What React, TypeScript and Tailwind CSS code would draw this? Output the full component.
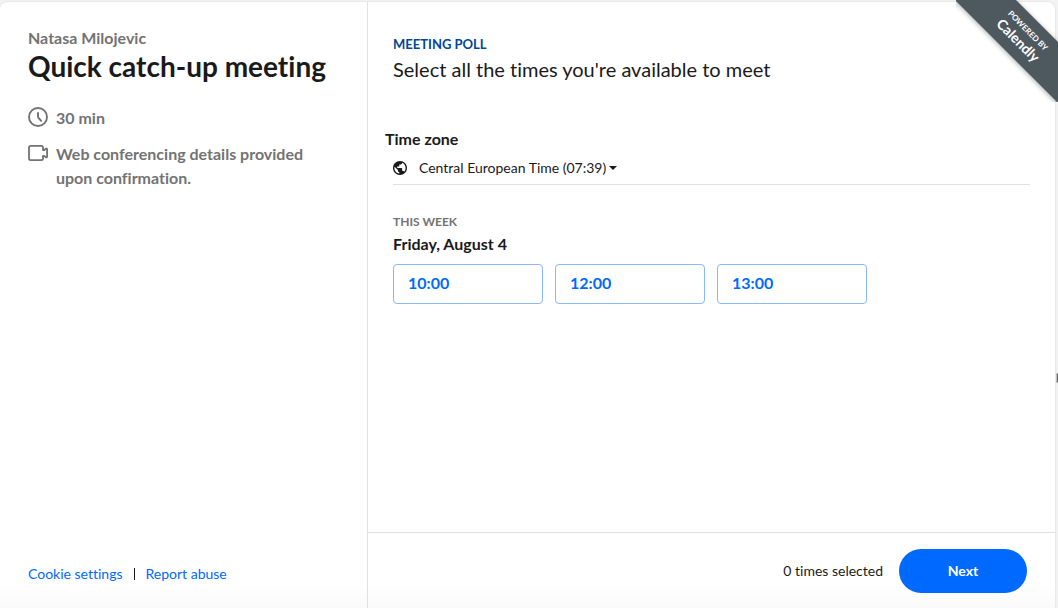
import { useState } from "react";

const slots = ["10:00", "12:00", "13:00"];

function ClockIcon() {
  return (
    <svg viewBox="0 0 10 10" className="mt-px size-5 shrink-0" aria-hidden="true">
      <path
        d="M.5 5a4.5 4.5 0 1 0 9 0 4.5 4.5 0 1 0-9 0M5 3.01v1.65q0 .43.26.73L6.6 6.95"
        fill="none"
        stroke="currentColor"
        strokeWidth=".95"
        strokeLinecap="round"
        strokeLinejoin="round"
      />
    </svg>
  );
}

function CameraIcon() {
  return (
    <svg
      viewBox="0 0 20 20"
      className="mt-px size-5 shrink-0"
      fill="none"
      stroke="currentColor"
      strokeWidth="1.8"
      strokeLinejoin="round"
      aria-hidden="true"
    >
      <path d="M13.4 2.9H2.6Q1 2.9 1 4.5v11Q1 17.1 2.6 17.1h10.8q1.6 0 1.6-1.6v-2.6h1.3l1.3 1.3q1.5.6 1.5-.7V6.5q0-1.3-1.5-.7l-1.3 1.3H15V4.5q0-1.6-1.6-1.6z" />
    </svg>
  );
}

function GlobeIcon() {
  return (
    <svg viewBox="2 2 20 20" className="size-[14px] shrink-0" fill="currentColor" aria-hidden="true">
      <path d="M12 2C6.48 2 2 6.48 2 12s4.48 10 10 10 10-4.48 10-10S17.52 2 12 2zm-1 17.93c-3.95-.49-7-3.85-7-7.93 0-.62.08-1.21.21-1.79L9 15v1c0 1.1.9 2 2 2v1.93zm6.9-2.54c-.26-.81-1-1.39-1.9-1.39h-1v-3c0-.55-.45-1-1-1H8v-2h2c.55 0 1-.45 1-1V7h2c1.1 0 2-.9 2-2v-.41c2.93 1.19 5 4.06 5 7.41 0 2.08-.8 3.97-2.1 5.39z" />
    </svg>
  );
}

function Ribbon() {
  return (
    <div className="absolute top-0 right-0 size-[102px] overflow-hidden">
      <a
        href="#calendly"
        className="absolute top-[15px] -right-[54px] flex h-[43px] w-[180px] rotate-45 flex-col items-center bg-[#4e585f] pt-2 text-white shadow-[0_1px_5px_rgba(0,0,0,0.35)]"
      >
        <span className="text-[8px] leading-[10px] font-bold uppercase">Powered by</span>
        <span className="text-[14px] leading-[18px] font-bold">Calendly</span>
      </a>
    </div>
  );
}

export default function App() {
  const [selected, setSelected] = useState<string[]>([]);

  const toggle = (slot: string) => {
    setSelected((prev) =>
      prev.includes(slot) ? prev.filter((s) => s !== slot) : [...prev, slot]
    );
  };

  return (
    <div className="relative flex min-h-screen bg-[#f3f3f4] pt-[2px] pr-[3px] font-['Lato','Open_Sans',sans-serif] text-[#1a1a1a] [font-variant-ligatures:none]">
      <div className="flex flex-1 rounded-t-lg bg-linear-to-t from-[#fafafa] to-white to-[24px] shadow-[0_0_2px_rgba(0,0,0,0.15)]">
        <aside className="flex w-[368px] shrink-0 flex-col border-r border-[#e1e1e1] px-7 py-6">
          <p className="text-[16px] leading-6 font-bold text-[#737373]">Natasa Milojevic</p>
          <h1 className="text-[28px] leading-8 font-bold">Quick catch-up meeting</h1>
          <div className="mt-6 flex flex-col gap-3 text-[16px] leading-6 font-bold text-[#737373]">
            <div className="flex gap-2">
              <ClockIcon />
              <p>30 min</p>
            </div>
            <div className="flex gap-2">
              <CameraIcon />
              <p>Web conferencing details provided upon confirmation.</p>
            </div>
          </div>
          <div className="mt-auto flex items-center gap-[11px] text-[14px] leading-5 text-[#0069ff]">
            <a href="#cookies">Cookie settings</a>
            <span className="h-3 w-px bg-[#1a1a1a]"></span>
            <a href="#report">Report abuse</a>
          </div>
        </aside>

        <div className="flex flex-1 flex-col">
          <main className="flex-1 px-[25px] pt-8">
            <p className="text-[13px] leading-5 font-bold text-[#004799] uppercase">Meeting poll</p>
            <h2 className="mt-[3px] text-[20px] leading-6">Select all the times you're available to meet</h2>

            <label htmlFor="timezone" className="-ml-2 mt-[46px] block text-[16px] leading-6 font-bold">
              Time zone
            </label>
            <div className="flex h-[34px] items-center border-b border-[#e1e1e1]">
              <GlobeIcon />
              <select
                id="timezone"
                className="ml-3 field-sizing-content cursor-pointer appearance-none bg-transparent text-[14px] leading-5"
              >
                <option>Central European Time (07:39)</option>
                <option>Eastern European Time (08:39)</option>
                <option>UK, Ireland, Lisbon Time (06:39)</option>
              </select>
              <svg viewBox="0 0 8 4" className="ml-[3px] h-1 w-2" fill="currentColor" aria-hidden="true">
                <path d="M0 0h8L4 4z" />
              </svg>
            </div>

            <p className="mt-[27px] text-[12px] leading-5 font-bold text-[#737373] uppercase">This week</p>
            <h3 className="text-[16px] leading-6 font-bold">Friday, August 4</h3>
            <div className="mt-2 flex flex-wrap gap-3">
              {slots.map((slot) => (
                <button
                  key={slot}
                  type="button"
                  aria-pressed={selected.includes(slot)}
                  onClick={() => toggle(slot)}
                  className="h-10 w-[150px] cursor-pointer rounded-[4px] border border-[#8ab8ff] px-[14px] pb-[2px] text-left text-[16px] font-bold text-[#0069ff] aria-pressed:bg-blue-50"
                >
                  {slot}
                </button>
              ))}
            </div>
          </main>

          <footer className="flex items-center justify-end gap-4 border-t border-[#e1e1e1] px-7 pt-4 pb-[15px]">
            <p className="text-[14px] leading-5">{selected.length} times selected</p>
            <button
              type="button"
              className="h-11 w-32 cursor-pointer rounded-full bg-[#0069ff] pb-[2px] text-[14px] font-bold text-white"
            >
              Next
            </button>
          </footer>
        </div>
      </div>
      <Ribbon />
      <div className="absolute top-[373px] right-0 h-[10px] w-[2px] border border-r-0 border-[#bdbdbd] bg-[#6b6b6b]"></div>
    </div>
  );
}
